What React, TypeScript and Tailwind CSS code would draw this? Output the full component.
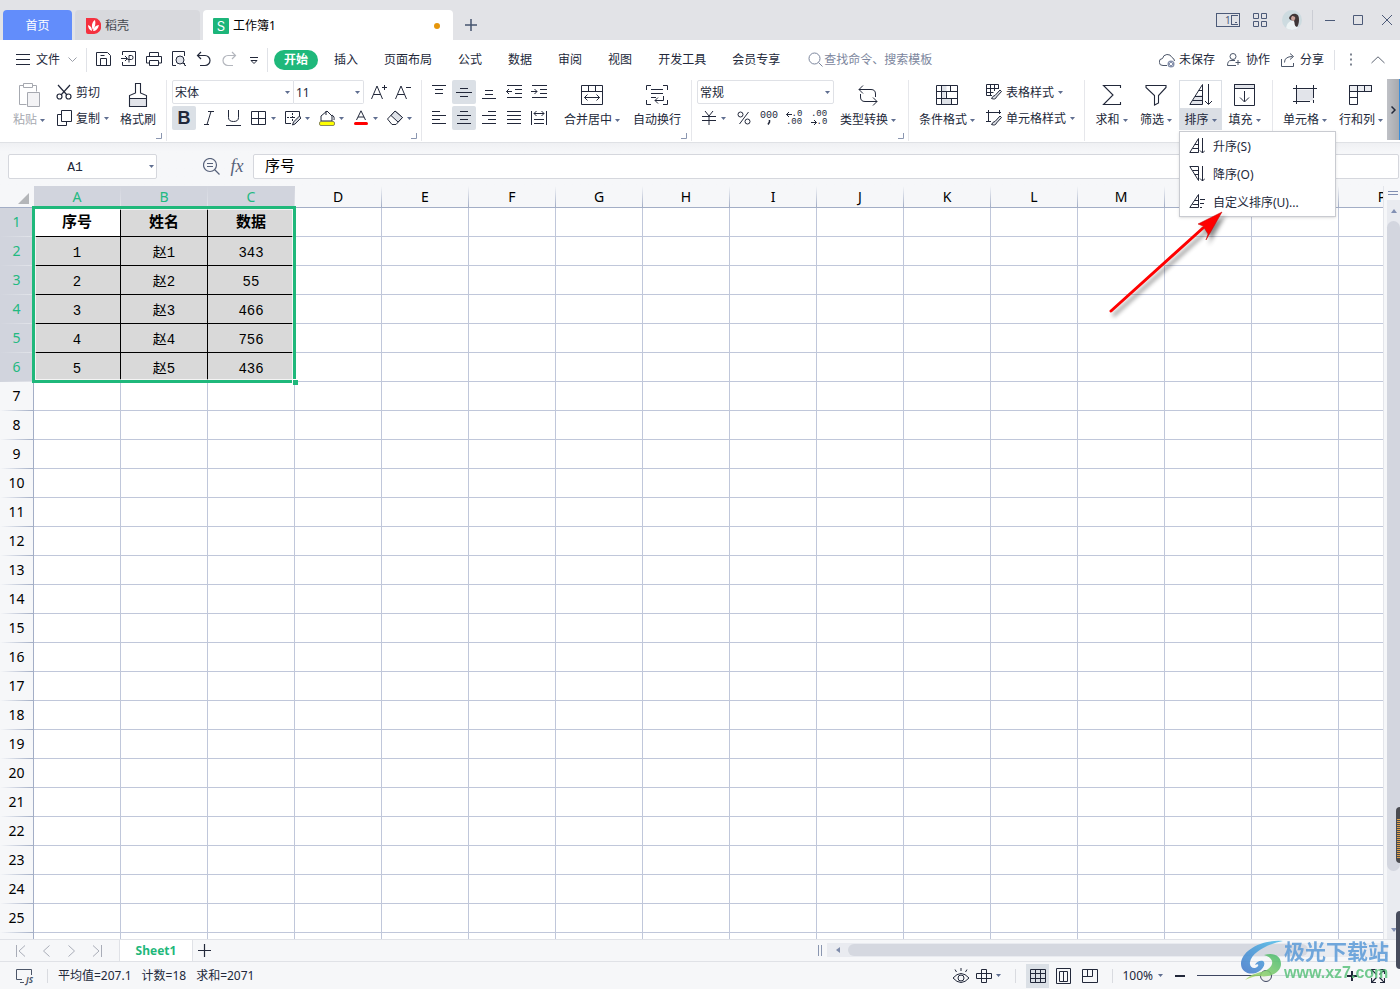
import React, { useState } from 'react';

const COLUMNS = 'ABCDEFGHIJKLMNOP'.split('');
const ROW_COUNT = 26;

const sheet = [
  ['序号', '姓名', '数据'],
  ['1', '赵1', '343'],
  ['2', '赵2', '55'],
  ['3', '赵3', '466'],
  ['4', '赵4', '756'],
  ['5', '赵5', '436'],
];

const menuTabs = ['插入', '页面布局', '公式', '数据', '审阅', '视图', '开发工具', '会员专享'];

interface IconProps {
  w?: number;
  h?: number;
  className?: string;
  children: React.ReactNode;
}

function Icon({ w = 16, h = 16, className = '', children }: IconProps) {
  return (
    <svg width={w} height={h} viewBox={`0 0 ${w} ${h}`} fill="none" stroke="currentColor" className={`shrink-0 ${className}`} aria-hidden="true">
      {children}
    </svg>
  );
}

function Caret({ className = '' }: { className?: string }) {
  return (
    <svg width="5" height="3" viewBox="0 0 5 3" className={`shrink-0 ${className}`} aria-hidden="true">
      <path d="M0 0h5L2.5 3z" fill="#5f6e90" />
    </svg>
  );
}

// ---- icons ----

const PasteIcon = () => (
  <Icon w={24} h={26} className="text-[#a6a9b0]">
    <path d="M6.500 3.500h-4v19h7M15.500 3.500h4v6" />
    <path d="M6.500 1.500h9v4h-9z" />
    <path d="M10.500 10.500h12v14h-12z" fill="#f3f3f5" />
  </Icon>
);
const CutIcon = () => (
  <Icon>
    <path d="M2 1l9 10M14 1L5 11" strokeWidth="1.2" />
    <circle cx="3.500" cy="12.500" r="2.500" strokeWidth="1.2" />
    <circle cx="12.500" cy="12.500" r="2.500" strokeWidth="1.2" />
  </Icon>
);
const CopyIcon = () => (
  <Icon>
    <path d="M5.500.5h10v11h-10z" />
    <path d="M5.500 4.500h-4v11h9v-4" />
  </Icon>
);
const BrushIcon = () => (
  <Icon w={20} h={26}>
    <path d="M1.500 16.500h17v8h-17z" fill="#e2e4ea" />
    <path d="M7.500 11V1.500h5V11l6 2.500v11h-17v-11z" strokeWidth="1.100" />
  </Icon>
);
const BordersIcon = () => (
  <Icon><path d="M.5 1.500h14v13H.5zM7.500 1.500v13M.5 8.500h14" /></Icon>
);
const DrawBorderIcon = () => (
  <Icon>
    <path d="M6 13.500H.5v-12h14V6" />
    <path d="M7.500 3v9M2 7.500h9" strokeDasharray="2 1" />
    <path d="M7.500 15l1-3 6-6 1.500 2-6 6z" fill="#d5d8df" />
  </Icon>
);
const FillColorIcon = () => (
  <Icon>
    <path d="M8 1L2 6v5h11V6L8 1zM7 1v4M13 5c2 1 2.500 3 2 5" />
    <rect x=".5" y="11.500" width="15" height="4" rx="1.500" fill="#ffff00" stroke="#8a8a58" />
  </Icon>
);
const FontColorIcon = () => (
  <Icon>
    <path d="M3.500 10L8 .8 12.500 10M5 7h6" />
    <rect x="1" y="12" width="14" height="3" rx="1.500" fill="#ff0000" stroke="none" />
  </Icon>
);
const EraserIcon = () => (
  <Icon>
    <path d="M.5 9l7.500-8 7.500 6.500L9 14.500H5z" />
    <path d="M4 5.500L8 1l7.500 6.500L11 12z" fill="#dfe2e8" />
  </Icon>
);
const Lines = ({ rows }: { rows: [number, number, number][] }) => (
  <Icon>
    {rows.map(([x1, x2, y]) => (
      <path key={`${x1}-${y}`} d={`M${x1} ${y}.5H${x2}`} />
    ))}
  </Icon>
);
const IndentIcon = ({ right = false }: { right?: boolean }) => (
  <Icon>
    <path d="M1 1.500h15M9 5.500h7M9 9.500h7M1 13.500h15" />
    {right ? <path d="M0 7.500h6M3.500 5L6 7.500 3.500 10" /> : <path d="M.5 7.500H6M3 5L.5 7.500 3 10" />}
  </Icon>
);
const DistributeIcon = () => (
  <Icon>
    <path d="M.5 1v14M15.500 1v14M3 3.500h10M5.500 1L3 3.500 5.500 6M10.500 1L13 3.500 10.500 6M3 9.500h10M3 13.500h10" />
  </Icon>
);
const MergeIcon = () => (
  <Icon w={22} h={20}>
    <path d="M.5.5h21v19H.5zM.5 6.500h21M7.500.5v6M14.500.5v6M3.500 12.500h15M6.500 9.500l-3 3 3 3M15.500 9.500l3 3-3 3" />
  </Icon>
);
const WrapIcon = () => (
  <Icon w={22} h={20}>
    <path d="M5 .5H.5V5M17 .5h4.500V5M5 19.500H.5V15M17 19.500h4.500V15M5 4.500h12M5 8.500h12M5 12.500h5M17.500 11v4.500H9M12 12.500l-3 3 3 3" />
  </Icon>
);
const ConvertIcon = () => (
  <Icon w={20} h={22}>
    <path d="M1 5.500h12q4.500 0 4.500 4.500v3M5 1.500l-4 4 4 4M19 17.500H7q-4.500 0-4.500-4.500v-3M15 13.500l4 4-4 4" />
  </Icon>
);
const CondFormatIcon = () => (
  <Icon w={22} h={20}>
    <path d="M5.500.5h5v6h-5zM5.500 7h4v6h-4zM5.500 13.500h10v6h-10z" fill="#dfe2e8" stroke="none" />
    <path d="M.5.5h21v19H.5zM.5 6.500h21M.5 13.500h21M5.500.5v19M10.500 6.500v7M14.500.5v6M15.500 13.500v6" />
  </Icon>
);
const TableStyleIcon = () => (
  <Icon>
    <path d="M6 11.500H.5V.5h12V5M.5 4.500h12M.5 8.500h7M4.500.5v11M8.500.5V7" />
    <path d="M5.500 14.500q1.500-3 3.500-3l5-5.500 1.500 1.500-5 5.500q-1 3-5 1.500z" fill="#dfe2e8" />
  </Icon>
);
const CellStyleIcon = () => (
  <Icon>
    <path d="M0 2.500h15M2.500 0v12M13.500 0v4M0 11.500h5" />
    <path d="M5.500 14.500q1.500-3 3.500-3l5-5.500 1.500 1.500-5 5.500q-1 3-5 1.500z" fill="#dfe2e8" />
  </Icon>
);
const SumIcon = () => (
  <Icon w={20} h={22}><path d="M18.500 4V1.500h-17L11 11 1.500 20.500h17V18" strokeWidth="1.100" /></Icon>
);
const FilterIcon = () => (
  <Icon w={22} h={22}><path d="M1 1.500h20v2l-7.500 8v7.500l-4 2v-9.500L1 3.500z" strokeWidth="1.100" /></Icon>
);
const SortIcon = () => (
  <Icon w={24} h={24}>
    <path d="M3 18h10v3H2zM6.500 12H13v5H4z" fill="#e2e4ea" stroke="none" />
    <path d="M13.500 1.500v20H.8zM6 13.500h7.500M9.500 7.500h4M3.500 17.500h10M19.500 1v20M16 18l3.500 3.500L23 18" />
  </Icon>
);
const FillDownIcon = () => (
  <Icon w={22} h={22}>
    <path d="M.5.5h20v4H.5z" fill="#e2e4ea" />
    <path d="M.5.5h20v21H.5zM10.500 7v10.500M6 13.500l4.500 4.500 4.500-4.500" />
  </Icon>
);
const CellIcon = () => (
  <Icon w={24} h={22}>
    <path d="M3.500 5.500h17v11h-17z" fill="#e2e4ea" stroke="none" />
    <path d="M0 4.500h24M3.500 1v19M20.500 1v13M0 17.500h17M20.500 16v3" />
  </Icon>
);
const RowColIcon = () => (
  <Icon w={24} h={20}>
    <path d="M.5.5h22v6H.5z" fill="#eceef2" />
    <path d="M.5.5h22v6h-14v13h-8zM8.500.5v6M15.500.5v6M.5 6.500h8M.5 12.500h8" />
  </Icon>
);
const SortUpIcon = () => (
  <Icon>
    <path d="M9.500.5v14H.8zM5.500 6.500h4M3.500 10.500h6M13.500 0v15M11 12.500l2.500 2.500 2.500-2.500" />
  </Icon>
);
const SortDownIcon = () => (
  <Icon>
    <path d="M9.500 14.500V.5H.8zM3.500 4.500h6M5.500 8.500h4M13.500 0v15M11 12.500l2.500 2.500 2.500-2.500" />
  </Icon>
);
const SortCustomIcon = () => (
  <Icon>
    <path d="M9.500.5v13H.8zM5.500 6.500h4M3.500 10.500h6M11 5.500h5M11 9.500h4M11 13.500h2" />
  </Icon>
);

// ---- ribbon pieces ----

function Group({ className, launcher = false, children }: { className: string; launcher?: boolean; children: React.ReactNode }) {
  return (
    <div className={`my-px flex shrink-0 flex-col border-r border-[#e6e7eb] ${className}`}>
      <div className="flex h-[50px]">{children}</div>
      {launcher && (
        <button aria-label="更多设置" className="mt-[3px] mr-1 self-end text-[#8a96b0]">
          <Icon w={6} h={6} className="block"><path d="M5.500 0v5.500H0" /></Icon>
        </button>
      )}
    </div>
  );
}

interface BigButtonProps {
  icon: React.ReactNode;
  label: string;
  width: string;
  caret?: boolean;
  active?: boolean;
  disabled?: boolean;
  onClick?: () => void;
}

function BigButton({ icon, label, width, caret = true, active, disabled, onClick }: BigButtonProps) {
  return (
    <button
      onClick={onClick}
      disabled={disabled}
      className={`flex h-[50px] shrink-0 flex-col items-center ${width} ${active ? 'border border-b-0 border-[#dbdfe5] bg-[#dbdfe5]' : ''}`}
    >
      <span className={`flex w-full items-center justify-center ${active ? 'h-[27px] bg-white' : 'h-7 pt-[2px]'}`}>{icon}</span>
      <span className={`flex h-[22px] items-center gap-[3px] pt-[2px] whitespace-nowrap ${disabled ? 'text-[#a6a9b0]' : ''}`}>
        {label}
        {caret && <Caret />}
      </span>
    </button>
  );
}

function ToolButton({ label, active, children }: { label: string; active?: boolean; children: React.ReactNode }) {
  return (
    <button aria-label={label} className={`flex size-6 shrink-0 items-center justify-center rounded-xs ${active ? 'bg-[#dbe0e6]' : ''}`}>
      {children}
    </button>
  );
}

function DropTool({ label, children }: { label: string; children: React.ReactNode }) {
  return (
    <button aria-label={label} className="flex h-6 w-[34px] shrink-0 items-center gap-1 pl-1">
      {children}
      <Caret />
    </button>
  );
}

function TextTool({ icon, label, caret }: { icon: React.ReactNode; label: string; caret?: boolean }) {
  return (
    <button className="flex h-6 items-center whitespace-nowrap">
      {icon}
      <span className="ml-1 pt-[2px]">{label}</span>
      {caret && <Caret className="ml-1" />}
    </button>
  );
}

function Picker({ label, value, className }: { label: string; value: string; className: string }) {
  return (
    <span className={`flex h-6 items-center border-[#dfe1e6] bg-white pr-[3px] ${className}`}>
      <select aria-label={label} className="min-w-0 flex-1 appearance-none bg-transparent pt-[2px] pl-[2px] outline-none">
        <option>{value}</option>
      </select>
      <Caret />
    </span>
  );
}

function TitleBar() {
  return (
    <header className="flex h-10 shrink-0 bg-[#e2e3e7]">
      <nav className="flex items-end gap-[3px] pl-[3px]">
        <button className="h-[30px] w-[69px] rounded-t-sm bg-[#628dfb] pt-[2px] text-white">首页</button>
        <button className="flex h-[30px] w-[125px] items-center gap-1 rounded-t-sm bg-[#d8d9dd] pt-[2px] pl-[11px] text-[#45484f]">
          <svg width="15" height="16" viewBox="0 0 15 16" aria-hidden="true">
            <path d="M0 0h8a7 7 0 0 1 7 8 7 7 0 0 1-7 8H2a2 2 0 0 1-2-2z" fill="#f5313f" />
            <path d="M6 13C3 12 2 9 2 7c3 1 4 3 4 6zM7 12C5 8 6 4 9 2c1 4 0 7-2 10zM7 13c1-4 3-6 6-6-1 4-3 6-6 6z" fill="#fff" />
          </svg>
          稻壳
        </button>
        <button className="flex h-[30px] w-[250px] items-center gap-1 rounded-t-sm bg-white pt-[2px] pl-[10px] text-black">
          <span className="flex size-4 items-center justify-center rounded-[1px] bg-[#1cb57a] font-[Inter,sans-serif] text-[13px] text-white">S</span>
          工作簿1
          <span className="mr-[13px] ml-auto size-[6px] rounded-full bg-[#e6960b]" />
        </button>
        <button aria-label="新建" className="flex size-[30px] items-center justify-center text-[#45546f]">
          <Icon w={12} h={12}><path d="M6 0v12M0 6h12" strokeWidth="1.500" /></Icon>
        </button>
      </nav>
      <div className="ml-auto flex items-center pr-2 text-[#4c5a78]">
        <button aria-label="窗口" className="flex h-[14px] w-6 items-center justify-between border border-current pl-2 text-[10px] leading-none">
          1
          <Icon w={8} h={12}><path d="M.5 1v10M1 1.500h6M1 10.500h6M4 8.500h2" /></Icon>
        </button>
        <button aria-label="应用" className="ml-[13px]">
          <Icon w={14} h={14} className="block"><path d="M.5.5h5v5h-5zM8.500.5h5v5h-5zM.5 8.500h5v5h-5zM8.500 8.500h5v5h-5z" /></Icon>
        </button>
        <button aria-label="账户" className="ml-[15px] overflow-hidden rounded-full">
          <svg width="20" height="20" viewBox="0 0 20 20" className="block">
            <rect width="20" height="20" fill="#cddbe0" />
            <path d="M4 20c0-5 2-8 5-9s7 3 7 9z" fill="#edf3f4" />
            <path d="M7 8c1-3 4-5 7-4 3 1 3 4 3 6 0 3-1 6-2 7-3-1-2-4-3-6-1-1-4 0-5-3z" fill="#3f3637" />
            <path d="M10 6c2 0 4 1 3 3l-1 2c-2 0-3-1-3-3z" fill="#c9a29a" />
          </svg>
        </button>
        <span className="ml-[10px] h-5 w-px bg-[#cbcdd4]" />
        <button aria-label="最小化" className="ml-3"><Icon w={10} h={10}><path d="M0 5.500h10" /></Icon></button>
        <button aria-label="最大化" className="ml-[18px]"><Icon w={10} h={10}><path d="M.5.5h9v9h-9z" /></Icon></button>
        <button aria-label="关闭" className="ml-[19px]"><Icon w={10} h={10}><path d="M0 0l10 10M10 0L0 10" /></Icon></button>
      </div>
    </header>
  );
}

function MenuBar() {
  return (
    <div className="flex h-[39px] shrink-0 items-center bg-white whitespace-nowrap">
      <button className="flex items-center pl-4">
        <Icon w={14} h={11}><path d="M0 .5h14M0 5.500h14M0 10.500h14" /></Icon>
        <span className="ml-[6px]">文件</span>
        <Icon w={9} h={6} className="ml-2 text-[#9a9ea8]"><path d="M.5.5l4 4 4-4" /></Icon>
      </button>
      <span className="ml-[9px] h-6 w-px bg-[#e0e2e7]" />
      <div className="ml-[9px] flex items-center gap-[9px] pb-[2px]">
        <button aria-label="保存"><Icon><path d="M.5 1.500h11l3 3v10H.5zM4.500 14.500v-7h6v7M4.500 4.500h4" /></Icon></button>
        <button aria-label="输出为PDF"><Icon><path d="M1.500 4V.5h13v14h-13V11M0 7.500h6M4 5l2.500 2.500L4 10M8 11.500V4.500h2.500q1.500 0 1.500 2t-1.500 2H6.500" /></Icon></button>
        <button aria-label="打印"><Icon><path d="M3.500 5V1.500h9V5M3.500 12h-3V5.500h15V12h-3M3.500 9.500h9v5h-9z" /></Icon></button>
        <button aria-label="打印预览"><Icon><path d="M5 14.500H1.500V.5h12V5M13.500 12v2.500" /><circle cx="9" cy="9" r="4" fill="#e2e4ea" /><path d="M12 12l3 3" /></Icon></button>
        <button aria-label="撤销"><Icon><path d="M5 1L1.500 4.500 5 8M1.500 4.500H9a5 5 0 0 1 0 10H4" strokeWidth="1.200" /></Icon></button>
        <button aria-label="恢复" className="text-[#b3b6bd]"><Icon><path d="M11 1l3.500 3.500L11 8M14.500 4.500H7a5 5 0 0 0 0 10h5" strokeWidth="1.200" /></Icon></button>
        <button aria-label="自定义"><Icon><path d="M4 6.500h8M5 9.500h6l-3 3z" /></Icon></button>
      </div>
      <span className="ml-[5px] h-6 w-px bg-[#e0e2e7]" />
      <button className="ml-[6px] h-5 rounded-full bg-[#1fb87b] px-[10px] font-bold text-white">开始</button>
      <nav className="ml-4 flex gap-[26px]">
        {menuTabs.map((tab) => (
          <button key={tab}>{tab}</button>
        ))}
      </nav>
      <label className="ml-7 flex items-center text-[#7c869d]">
        <Icon w={15} h={15}><circle cx="6.500" cy="6.500" r="5.500" /><path d="M10.500 10.500l4 4" /></Icon>
        <input aria-label="搜索" placeholder="查找命令、搜索模板" className="ml-px w-36 outline-none placeholder:text-[#7c869d]" />
      </label>
      <div className="ml-auto flex items-center pr-[15px]">
        <button className="flex items-center gap-1">
          <Icon className="text-[#4c5669]">
            <path d="M8 13.500H4a3.500 3.500 0 0 1-.5-7 5 5 0 0 1 9.500-1 4 4 0 0 1 2.500 3.500" />
            <circle cx="12" cy="12" r="3.500" fill="#8590ab" stroke="none" />
            <path d="M10.500 10.500l3 3M13.500 10.500l-3 3" stroke="#fff" />
          </Icon>
          未保存
        </button>
        <button className="ml-[11px] flex items-center gap-1">
          <Icon className="text-[#4c5669]"><circle cx="7" cy="4.500" r="3" /><path d="M9 8.500H5q-3.500 0-3.500 5H10M9.500 10.500h5M12 8v5" /></Icon>
          协作
        </button>
        <button className="ml-[10px] flex items-center gap-1">
          <Icon className="text-[#4c5669]"><path d="M1.500 7v7.500h12V11M4.500 10.500q0-6 8-6M10 1.500l3.500 3-3.500 3" /></Icon>
          分享
        </button>
        <span className="ml-[10px] h-5 w-px bg-[#dfe1e6]" />
        <button aria-label="更多" className="ml-[15px] text-[#7d8390]"><Icon w={3} h={13}><path d="M0 1.500h2M0 6.500h2M0 11.500h2" strokeWidth="2" /></Icon></button>
        <button aria-label="收起功能区" className="ml-[18px] text-[#5d6472]"><Icon w={14} h={8}><path d="M.5 7L7 .8 13.500 7" /></Icon></button>
      </div>
    </div>
  );
}

function SortMenu() {
  const items = [
    { icon: <SortUpIcon />, label: '升序(S)' },
    { icon: <SortDownIcon />, label: '降序(O)' },
    { icon: <SortCustomIcon />, label: '自定义排序(U)...' },
  ];
  return (
    <>
      <ul className="absolute top-[51px] left-0 z-20 w-[157px] border border-[#c9cbd1] bg-white shadow-sm">
        {items.map((item) => (
          <li key={item.label}>
            <button className="flex h-7 w-full items-center gap-2 pl-[9px] text-left">
              {item.icon}
              <span className="pt-[2px]">{item.label}</span>
            </button>
          </li>
        ))}
      </ul>
      <svg width="130" height="116" viewBox="0 0 130 116" className="absolute top-[130px] -left-[76px] z-30 drop-shadow-[3px_4px_2px_rgba(0,0,0,0.45)]" aria-hidden="true">
        <path d="M8 101L100 18" stroke="#ff0000" strokeWidth="3" strokeLinecap="round" />
        <path d="M119 2L95 14l5 2 5 8-2 6z" fill="#ff0000" stroke="#c00000" strokeWidth=".5" />
      </svg>
    </>
  );
}

function Ribbon() {
  const [sortOpen, setSortOpen] = useState(true);
  return (
    <div className="flex h-16 shrink-0 border-b border-[#dfe1e5] bg-white">
      <Group className="w-[167px] pl-[2px]" launcher>
        <BigButton icon={<PasteIcon />} label="粘贴" width="w-[54px]" disabled />
        <div className="flex w-[56px] flex-col gap-[2px]">
          <TextTool icon={<CutIcon />} label="剪切" />
          <TextTool icon={<CopyIcon />} label="复制" caret />
        </div>
        <BigButton icon={<BrushIcon />} label="格式刷" width="w-[52px]" caret={false} />
      </Group>

      <Group className="w-[255px] pl-[5px]" launcher>
        <div className="flex flex-col gap-[2px]">
          <div className="flex">
            <Picker label="字体" value="宋体" className="w-[122px] rounded-l-xs border" />
            <Picker label="字号" value="11" className="w-[70px] rounded-r-xs border border-l-0" />
            <button aria-label="增大字号" className="ml-[3px] flex h-6 w-6 items-center justify-center">
              <Icon><path d="M.5 15L6 2l5.500 13M2.500 10.500h7M11 3.500h5M13.500 1v5" /></Icon>
            </button>
            <button aria-label="减小字号" className="flex h-6 w-6 items-center justify-center">
              <Icon><path d="M.5 15L6 2l5.500 13M2.500 10.500h7M11 3.500h5" /></Icon>
            </button>
          </div>
          <div className="flex gap-px">
            <ToolButton label="加粗" active><span className="font-['Liberation_Sans',sans-serif] text-lg font-bold">B</span></ToolButton>
            <ToolButton label="倾斜"><Icon><path d="M7 1.500h6M3 14.500h5M10 1.500L6 14.500" /></Icon></ToolButton>
            <ToolButton label="下划线"><Icon><path d="M2.500 0v7.500q0 4 5 4t5-4V0M0 15.500h15" /></Icon></ToolButton>
            <div className="flex">
              <DropTool label="边框"><BordersIcon /></DropTool>
              <DropTool label="绘制边框"><DrawBorderIcon /></DropTool>
              <DropTool label="填充颜色"><FillColorIcon /></DropTool>
              <DropTool label="字体颜色"><FontColorIcon /></DropTool>
              <DropTool label="清除"><EraserIcon /></DropTool>
            </div>
          </div>
        </div>
      </Group>

      <Group className="w-[270px] pl-[5px]" launcher>
        <div className="flex flex-col gap-[2px]">
          <div className="flex gap-px">
            <ToolButton label="顶端对齐"><Lines rows={[[1, 15, 1], [4, 12, 5], [4, 12, 9]]} /></ToolButton>
            <ToolButton label="垂直居中" active><Lines rows={[[4, 12, 4], [0, 16, 8], [4, 12, 12]]} /></ToolButton>
            <ToolButton label="底端对齐"><Lines rows={[[4, 12, 6], [4, 12, 10], [1, 15, 14]]} /></ToolButton>
            <ToolButton label="减少缩进"><IndentIcon /></ToolButton>
            <ToolButton label="增加缩进"><IndentIcon right /></ToolButton>
          </div>
          <div className="flex gap-px">
            <ToolButton label="左对齐"><Lines rows={[[1, 9, 1], [1, 15, 5], [1, 9, 9], [1, 15, 13]]} /></ToolButton>
            <ToolButton label="水平居中" active><Lines rows={[[4, 12, 1], [1, 15, 5], [4, 12, 9], [1, 15, 13]]} /></ToolButton>
            <ToolButton label="右对齐"><Lines rows={[[7, 15, 1], [1, 15, 5], [7, 15, 9], [1, 15, 13]]} /></ToolButton>
            <ToolButton label="两端对齐"><Lines rows={[[1, 15, 1], [1, 15, 5], [1, 15, 9], [1, 15, 13]]} /></ToolButton>
            <ToolButton label="分散对齐"><DistributeIcon /></ToolButton>
          </div>
        </div>
        <div className="ml-[9px] flex gap-px">
          <BigButton icon={<MergeIcon />} label="合并居中" width="w-16" />
          <BigButton icon={<WrapIcon />} label="自动换行" width="w-16" caret={false} />
        </div>
      </Group>

      <Group className="w-[217px] pl-[5px]" launcher>
        <div className="flex flex-col gap-[2px]">
          <Picker label="数字格式" value="常规" className="w-[137px] rounded-xs border" />
          <div className="flex gap-px">
            <DropTool label="货币"><Icon><path d="M4 1l4 5 4-5M1 6.500h14M1 10.500h14M8 6v9" /></Icon></DropTool>
            <ToolButton label="百分比"><Icon><circle cx="4.500" cy="4.500" r="2.500" /><circle cx="11.500" cy="11.500" r="2.500" /><path d="M12.500 2l-9 12" /></Icon></ToolButton>
            <button aria-label="千位分隔" className="flex size-6 flex-col items-center justify-center font-['Liberation_Mono',monospace] text-[10px] leading-[9px]">
              000
              <Icon w={4} h={5}><path d="M2.500 0v2L1 4.500" strokeWidth="1.500" /></Icon>
            </button>
            <button aria-label="增加小数" className="flex size-6 flex-col items-center justify-center font-['Liberation_Mono',monospace] text-[9px] leading-[8px]">
              <span className="flex items-center"><Icon w={6} h={7}><path d="M.5 3.500H6M3 1L.5 3.500 3 6" /></Icon>.0</span>
              <span>.00</span>
            </button>
            <button aria-label="减少小数" className="flex size-6 flex-col items-center justify-center font-['Liberation_Mono',monospace] text-[9px] leading-[8px]">
              <span>.00</span>
              <span className="flex items-center"><Icon w={6} h={7}><path d="M0 3.500h5.500M3 1l2.500 2.500L3 6" /></Icon>.0</span>
            </button>
          </div>
        </div>
        <div className="ml-[2px] flex">
          <BigButton icon={<ConvertIcon />} label="类型转换" width="w-16" />
        </div>
      </Group>

      <Group className="w-[176px] pl-[6px]">
        <BigButton icon={<CondFormatIcon />} label="条件格式" width="w-16" />
        <div className="ml-[7px] flex flex-col gap-[2px]">
          <TextTool icon={<TableStyleIcon />} label="表格样式" caret />
          <TextTool icon={<CellStyleIcon />} label="单元格样式" caret />
        </div>
      </Group>

      <Group className="w-[188px] pl-[5px]">
        <div className="flex gap-px">
          <BigButton icon={<SumIcon />} label="求和" width="w-[43px]" />
          <BigButton icon={<FilterIcon />} label="筛选" width="w-11" />
          <div className="relative">
            <BigButton icon={<SortIcon />} label="排序" width="w-[43px]" active={sortOpen} onClick={() => setSortOpen(!sortOpen)} />
            {sortOpen && <SortMenu />}
          </div>
          <BigButton icon={<FillDownIcon />} label="填充" width="w-[43px]" />
        </div>
      </Group>

      <div className="my-px flex shrink-0 gap-[6px] pl-[7px]">
        <BigButton icon={<CellIcon />} label="单元格" width="w-[50px]" />
        <BigButton icon={<RowColIcon />} label="行和列" width="w-[50px]" />
      </div>
      <button aria-label="向右滚动" className="mb-[2px] ml-auto flex w-[13px] shrink-0 items-center justify-center border-r border-[#3a8edb] bg-linear-to-r from-[#bfc1c6] to-[#a7a9ae]">
        <Icon w={5} h={8}><path d="M.5.5L4 4 .5 7.500" strokeWidth="1.500" /></Icon>
      </button>
    </div>
  );
}

function FormulaBar() {
  return (
    <div className="flex h-[43px] shrink-0 items-center bg-linear-to-b from-[#eff0f3] to-[#f6f7f9] to-20% pt-[3px] pl-2">
      <div className="flex h-[25px] w-[149px] items-center rounded-xs border border-[#d5d7dd] bg-white pr-[2px]">
        <input aria-label="名称框" defaultValue="A1" className="min-w-0 flex-1 pt-[3px] pr-2 text-center font-['Liberation_Mono',monospace] text-[13px] outline-none" />
        <Caret />
      </div>
      <button aria-label="浏览公式" className="ml-[46px] text-[#56617a]">
        <Icon w={17} h={17}><circle cx="7" cy="7" r="6.500" strokeWidth="1.200" /><path d="M4 5.500h6M4 8.500h6M11.500 11.500l5 5" strokeWidth="1.200" /></Icon>
      </button>
      <button aria-label="插入函数" className="ml-[9px] w-4 font-['Liberation_Serif',serif] text-lg leading-none text-[#56617a] italic">fx</button>
      <input
        aria-label="编辑栏"
        defaultValue="序号"
        className="mr-px ml-2 h-[25px] flex-1 rounded-xs border border-[#d5d7dd] bg-white pb-[3px] pl-[11px] text-[15px] text-black outline-none"
      />
    </div>
  );
}

function Grid() {
  return (
    <div className="min-w-0 flex-1 overflow-hidden bg-white">
      <div className="relative w-max">
        <table className="w-[1426px] table-fixed border-separate border-spacing-0 text-center text-black">
          <thead>
            <tr className="h-[22px] text-[14px] leading-5">
              <th className="w-[34px] border-b border-[#a3aec6] bg-[#f6f7f9] p-0">
                <Icon w={11} h={11} className="mt-1 ml-[18px]"><path d="M11 0v11H0z" fill="#b4b6b9" stroke="none" /></Icon>
              </th>
              {COLUMNS.map((col, i) => (
                <th
                  key={col}
                  scope="col"
                  className={`w-[87px] border-b border-[#a3aec6] bg-[length:1px_100%] bg-right bg-no-repeat p-0 pr-px font-normal ${
                    i < 3 ? 'bg-[#d1d4dd] bg-[linear-gradient(#d1d4dd,#e2e4ea)] text-[#22b981]' : 'bg-[#f6f7f9] bg-[linear-gradient(#f6f7f9,#a3aec6)]'
                  }`}
                >
                  {col}
                </th>
              ))}
            </tr>
          </thead>
          <tbody>
            {Array.from({ length: ROW_COUNT }, (_, r) => (
              <tr key={r} className="h-[29px]">
                <th
                  scope="row"
                  className={`border-r border-[#a3aec6] bg-[length:100%_1px] bg-bottom bg-no-repeat p-0 pb-[2px] text-[14px] leading-5 font-normal ${
                    r < 6 ? 'bg-[#d1d4dd] bg-[linear-gradient(90deg,#d1d4dd,#e2e4ea)] text-[#22b981]' : 'bg-[#f6f7f9] bg-[linear-gradient(90deg,#f6f7f9,#a3aec6)]'
                  }`}
                >
                  {/* the last row only peeks out, too short for its number */}
                  {r < ROW_COUNT - 1 ? r + 1 : ''}
                </th>
                {COLUMNS.map((col, c) => {
                  const filled = r < 6 && c < 3;
                  const bg = filled && !(r === 0 && c === 0) ? 'bg-[#d9d9d9]' : '';
                  return (
                    <td
                      key={col}
                      className={`border-r border-b p-0 pt-1 font-['Liberation_Mono','Noto_Sans_CJK_SC',monospace] leading-5 ${bg} ${
                        filled ? 'border-black' : 'border-[#c0c7da]'
                      } ${r === 0 ? 'text-[15px] font-bold' : 'text-[14px]'}`}
                    >
                      {filled ? sheet[r][c] : ''}
                    </td>
                  );
                })}
              </tr>
            ))}
          </tbody>
        </table>
        <div className="pointer-events-none absolute top-5 left-8 h-[177px] w-[264px] border-[3px] border-[#1fb87b]">
          <div className="h-full border border-white/70" />
          <span className="absolute -right-[5px] -bottom-[5px] size-[6px] border-t border-l border-white bg-[#1fb87b]" />
        </div>
      </div>
    </div>
  );
}

function VerticalScroll() {
  return (
    <div className="flex w-[17px] shrink-0 flex-col border-l border-[#e3e5ea] bg-[#f6f7f9] pl-[3px] text-[#8290b3]">
      <Icon w={10} h={14} className="mx-px"><path d="M0 5.500h10M0 8.500h10" /></Icon>
      <div className="flex flex-1 flex-col items-center bg-[#e9ebf0]">
        <button aria-label="向上滚动" className="flex h-[21px] items-center"><Icon w={6} h={4}><path d="M0 4h6L3 0z" fill="currentColor" stroke="none" /></Icon></button>
        <div className="w-full flex-1 rounded-full bg-[#d3d6df]" />
        <button aria-label="向下滚动" className="flex h-[68px] items-end pb-[7px]"><Icon w={6} h={4}><path d="M0 0h6L3 4z" fill="currentColor" stroke="none" /></Icon></button>
      </div>
    </div>
  );
}

function SheetTabs() {
  return (
    <div className="flex h-[23px] shrink-0 items-stretch border-y border-[#e0e2e7] bg-[#f6f7f9]">
      <div className="flex w-[119px] items-center gap-[18px] pl-4 text-[#a9adb8]">
        <button aria-label="第一张"><Icon w={9} h={12}><path d="M.5 0v12M9 .5L3 6l6 5.500" /></Icon></button>
        <button aria-label="上一张"><Icon w={7} h={12}><path d="M6.500.5L.5 6l6 5.500" /></Icon></button>
        <button aria-label="下一张"><Icon w={7} h={12}><path d="M.5.5l6 5.500-6 5.500" /></Icon></button>
        <button aria-label="最后一张"><Icon w={9} h={12}><path d="M8.500 0v12M0 .5L6 6l-6 5.500" /></Icon></button>
      </div>
      <button className="w-[74px] border-x border-[#e0e2e7] bg-white font-bold text-[#1fb87b]">Sheet1</button>
      <button aria-label="新建工作表" className="px-[5px]"><Icon w={13} h={13}><path d="M6.500 0v13M0 6.500h13" strokeWidth="1.200" /></Icon></button>
      <div className="ml-auto flex w-[582px] items-center pr-3 pb-px">
        <Icon w={4} h={11} className="text-[#8a96b0]"><path d="M.5 0v11M3.500 0v11" /></Icon>
        <div className="ml-[5px] flex h-[14px] flex-1 items-center bg-[#e9ebf0]">
          <button aria-label="向左滚动" className="flex w-[21px] justify-center text-[#7f8cab]"><Icon w={4} h={6}><path d="M4 0v6L0 3z" fill="currentColor" stroke="none" /></Icon></button>
          <div className="h-3 w-[460px] rounded-full bg-[#d5d8e0]" />
        </div>
      </div>
    </div>
  );
}

function StatusBar() {
  return (
    <footer className="flex h-[27px] shrink-0 items-center bg-[#f6f7f9] pl-4 whitespace-nowrap">
      <button aria-label="JS宏" className="relative text-[#4c5669]">
        <Icon w={17} h={16}><path d="M6 11.500H.5v-10h15V7M4 14.500h4" /></Icon>
        <span className="absolute right-0 bottom-0 text-[8px] leading-none font-bold italic">JS</span>
      </button>
      <span className="ml-[14px] h-[14px] w-px bg-[#d9dbe0]" />
      <div className="ml-[10px] flex gap-[10px]">
        <span>平均值=207.1</span>
        <span>计数=18</span>
        <span>求和=2071</span>
      </div>
      <div className="ml-auto flex items-center pr-[15px]">
        <button aria-label="护眼模式">
          <Icon w={18} h={16}>
            <path d="M1 10q8-9 16 0-8 9-16 0zM9 0v3M3 1.500L4.500 4M15 1.500L13.500 4" />
            <circle cx="9" cy="10" r="3" />
          </Icon>
        </button>
        <button aria-label="阅读模式" className="ml-[6px] flex items-center gap-1">
          <Icon><path d="M.5 5.500h15v5H.5zM5.500 1.500h5v13h-5z" /></Icon>
          <Caret />
        </button>
        <span className="ml-[14px] h-[14px] w-px bg-[#d9dbe0]" />
        <button aria-label="普通视图" className="ml-[10px] flex h-6 w-[23px] items-center justify-center bg-[#dbe0e6]">
          <Icon><path d="M.5 1.500h15v13H.5zM.5 5.500h15M.5 10.500h15M5.500 1.500v13M10.500 1.500v13" /></Icon>
        </button>
        <button aria-label="分页预览" className="ml-[7px]"><Icon w={15}><path d="M.5.5h14v15H.5zM3.500 3.500h8v10h-8zM7.500 3.500v10" /></Icon></button>
        <button aria-label="页面布局" className="ml-[11px]"><Icon><path d="M.5 1.500h15v13H.5zM5.500 1.500v7M10.500 1.500v7h-10" /></Icon></button>
        <span className="ml-[14px] h-[14px] w-px bg-[#d9dbe0]" />
        <button className="ml-[9px] flex items-center gap-[5px]">100%<Caret /></button>
        <button aria-label="缩小" className="ml-3"><Icon w={10} h={10}><path d="M0 5h10" strokeWidth="2" /></Icon></button>
        <input
          type="range"
          aria-label="显示比例"
          min={0}
          max={200}
          defaultValue={100}
          className="mx-3 h-[14px] w-[138px] appearance-none bg-[linear-gradient(90deg,#3d4661_50%,#d5d8e0_50%)] bg-[length:100%_1px] bg-center bg-no-repeat [&::-webkit-slider-thumb]:size-3 [&::-webkit-slider-thumb]:appearance-none [&::-webkit-slider-thumb]:rounded-full [&::-webkit-slider-thumb]:border [&::-webkit-slider-thumb]:border-[#3d4661] [&::-webkit-slider-thumb]:bg-[#f1f1f1]"
        />
        <button aria-label="放大"><Icon w={10} h={10}><path d="M0 5h10M5 0v10" strokeWidth="2" /></Icon></button>
        <button aria-label="全屏" className="ml-[14px]">
          <Icon w={14} h={14}><path d="M.5 5V.5H5M9 .5h4.500V5M13.500 9v4.500H9M5 13.500H.5V9M.5.5l5 5M13.500.5l-5 5M13.500 13.500l-5-5M.5 13.500l5-5" strokeWidth="1.200" /></Icon>
        </button>
      </div>
    </footer>
  );
}

function Watermark() {
  return (
    <div className="pointer-events-none absolute right-[11px] bottom-[6px] flex items-center opacity-85">
      <svg width="44" height="42" viewBox="0 0 44 42" aria-hidden="true">
        <defs>
          <linearGradient id="swirlBlue" x1="1" y1="0" x2="0" y2="1">
            <stop offset="0" stopColor="#4fc0ea" />
            <stop offset="1" stopColor="#3f74c8" />
          </linearGradient>
          <linearGradient id="swirlGreen" x1="1" y1="0" x2="0" y2="1">
            <stop offset="0" stopColor="#3fb86c" />
            <stop offset="1" stopColor="#b5dc6a" />
          </linearGradient>
        </defs>
        <path d="M43 1C23-1 1 10 1 24c0 8 9 12 17 8 6-3 8-9 5-11-3-1-7 1-8 4 2-1 4-1 3 1-3 4-9 2-8-4C12 12 28 4 43 1z" fill="url(#swirlBlue)" />
        <path d="M24 15c10-3 17 1 17 9 0 8-10 14-22 12-5 0-9 2-14 4 7-7 14-7 19-9 6-2 9-6 8-10-1-3-4-5-8-6z" fill="url(#swirlGreen)" />
      </svg>
      <div className="flex flex-col font-bold">
        <span className="text-[21px] leading-6 text-[#5c9bd8]">极光下载站</span>
        <span className="font-['Liberation_Sans',sans-serif] text-[16px] leading-5 text-[#5cc27d]">www.xz7.com</span>
      </div>
    </div>
  );
}

function App() {
  return (
    <div className="relative flex h-screen flex-col overflow-hidden bg-white font-['Noto_Sans','Noto_Sans_CJK_SC',sans-serif] text-[12px] leading-4 text-[#22283a]">
      <TitleBar />
      <MenuBar />
      <Ribbon />
      <FormulaBar />
      <main className="flex min-h-0 flex-1">
        <Grid />
        <VerticalScroll />
      </main>
      <SheetTabs />
      <StatusBar />

      <div className="absolute right-0 bottom-[126px] h-[56px] w-1 rounded-l-sm bg-[#4a4b50] pt-3 pb-1 pl-px">
        <div className="h-full bg-[repeating-linear-gradient(#e0a24a_0_1px,#4a4b50_1px_2px)]" />
      </div>
      <div className="absolute right-0 bottom-5 h-[58px] w-1 rounded-l-sm bg-[#474c5c]" />
      <Watermark />
    </div>
  );
}

export default App;
